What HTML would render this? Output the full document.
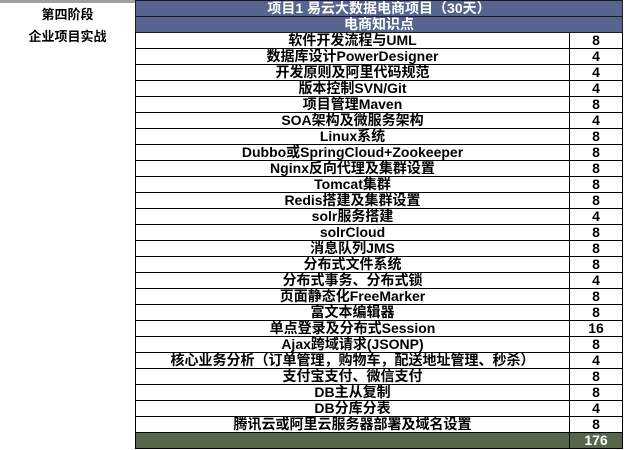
<!DOCTYPE html>
<html><head><meta charset="utf-8"><style>
body{margin:0;width:625px;height:450px;background:#fff;position:relative;overflow:hidden;font-family:"Liberation Sans","Noto Sans CJK SC",sans-serif;font-weight:bold;}
.topbar{position:absolute;left:0;top:0;width:135px;height:3px;background:#a0a0a0}
.lt{position:absolute;left:0;width:135px;text-align:center;font-size:13px;color:#000}
table{position:absolute;left:135px;top:0;border-collapse:collapse;width:487px;table-layout:fixed}
td{height:15px;padding:0;border:1px solid #000;font-size:14px;line-height:15px;text-align:center;color:#000;white-space:nowrap;overflow:hidden}
tr.h td{background:#56648e;color:#fff;border-color:#1a1a2a}
tr.f td{background:#56664a;color:#fff}
</style></head><body>
<div class="topbar"></div>
<div class="lt" style="top:4px">第四阶段</div>
<div class="lt" style="top:26px">企业项目实战</div>
<table>
<colgroup><col style="width:434px"><col style="width:53px"></colgroup>
<tr class="h"><td colspan="2">项目1 易云大数据电商项目（30天）</td></tr>
<tr class="h"><td colspan="2">电商知识点</td></tr>
<tr><td>软件开发流程与UML</td><td>8</td></tr>
<tr><td>数据库设计PowerDesigner</td><td>4</td></tr>
<tr><td>开发原则及阿里代码规范</td><td>4</td></tr>
<tr><td>版本控制SVN/Git</td><td>4</td></tr>
<tr><td>项目管理Maven</td><td>8</td></tr>
<tr><td>SOA架构及微服务架构</td><td>4</td></tr>
<tr><td>Linux系统</td><td>8</td></tr>
<tr><td>Dubbo或SpringCloud+Zookeeper</td><td>8</td></tr>
<tr><td>Nginx反向代理及集群设置</td><td>8</td></tr>
<tr><td>Tomcat集群</td><td>8</td></tr>
<tr><td>Redis搭建及集群设置</td><td>8</td></tr>
<tr><td>solr服务搭建</td><td>4</td></tr>
<tr><td>solrCloud</td><td>8</td></tr>
<tr><td>消息队列JMS</td><td>8</td></tr>
<tr><td>分布式文件系统</td><td>8</td></tr>
<tr><td>分布式事务、分布式锁</td><td>4</td></tr>
<tr><td>页面静态化FreeMarker</td><td>8</td></tr>
<tr><td>富文本编辑器</td><td>8</td></tr>
<tr><td>单点登录及分布式Session</td><td>16</td></tr>
<tr><td>Ajax跨域请求(JSONP)</td><td>8</td></tr>
<tr><td>核心业务分析（订单管理，购物车，配送地址管理、秒杀）</td><td>4</td></tr>
<tr><td>支付宝支付、微信支付</td><td>8</td></tr>
<tr><td>DB主从复制</td><td>8</td></tr>
<tr><td>DB分库分表</td><td>4</td></tr>
<tr><td>腾讯云或阿里云服务器部署及域名设置</td><td>8</td></tr>
<tr class="f"><td></td><td>176</td></tr>
</table>
</body></html>
